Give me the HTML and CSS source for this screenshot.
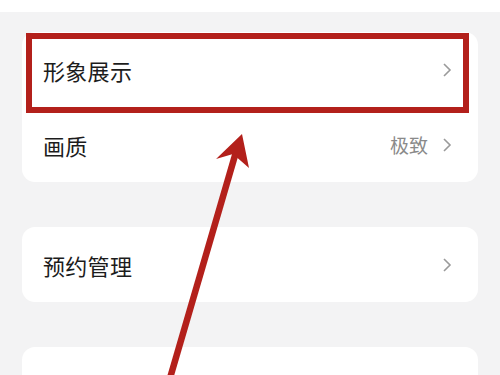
FILE: index.html
```html
<!DOCTYPE html>
<html lang="zh">
<head>
<meta charset="utf-8">
<link rel="stylesheet" href="styles.css">
</head>
<body>
<div class="topbar"></div>
<main class="content">
  <section class="card">
    <div class="row">
      <span class="label">形象展示</span>
      <span class="right"><svg class="chev" viewBox="0 0 10 16"><path d="M2 2 L8 8 L2 14"/></svg></span>
    </div>
    <div class="row">
      <span class="label">画质</span>
      <span class="right"><span class="value">极致</span><svg class="chev" viewBox="0 0 10 16"><path d="M2 2 L8 8 L2 14"/></svg></span>
    </div>
  </section>
  <section class="card">
    <div class="row">
      <span class="label">预约管理</span>
      <span class="right"><svg class="chev" viewBox="0 0 10 16"><path d="M2 2 L8 8 L2 14"/></svg></span>
    </div>
  </section>
  <section class="card">
    <div class="row">
      <span class="label">隐私</span>
      <span class="right"><svg class="chev" viewBox="0 0 10 16"><path d="M2 2 L8 8 L2 14"/></svg></span>
    </div>
  </section>
</main>
<div class="highlight"></div>
<svg class="annot" viewBox="0 0 500 375" width="500" height="375">
  <line x1="168" y1="385" x2="236" y2="152" stroke="#b3201b" stroke-width="6.5"/>
  <polygon points="242,134 216,159 233,154 249,168" fill="#b3201b"/>
</svg>
</body>
</html>
```
FILE: styles.css
```css
html, body {
  margin: 0;
  padding: 0;
}
body {
  width: 500px;
  height: 375px;
  overflow: hidden;
  background: #f3f3f4;
  font-family: "Noto Sans CJK SC", "Noto Sans", sans-serif;
  position: relative;
}
.topbar {
  height: 12px;
  background: #ffffff;
}
.content {
  padding: 20px 22px 0 22px;
  display: flex;
  flex-direction: column;
  gap: 45px;
}
.card {
  background: #ffffff;
  border-radius: 13px;
}
.row {
  height: 75px;
  display: flex;
  align-items: center;
  justify-content: space-between;
  padding: 0 26px 0 21px;
}
.label {
  font-size: 22px;
  color: #1c1c1c;
  letter-spacing: 0.3px;
}
.right {
  display: flex;
  align-items: center;
  gap: 14px;
}
.value {
  font-size: 19px;
  color: #8a8a8a;
}
.chev {
  width: 10px;
  height: 16px;
  fill: none;
  stroke: #9a9a9a;
  stroke-width: 1.6;
}
.highlight {
  position: absolute;
  left: 26px;
  top: 33px;
  width: 431px;
  height: 68px;
  border: 6px solid #b3201b;
}
.annot {
  position: absolute;
  left: 0;
  top: 0;
}
```
